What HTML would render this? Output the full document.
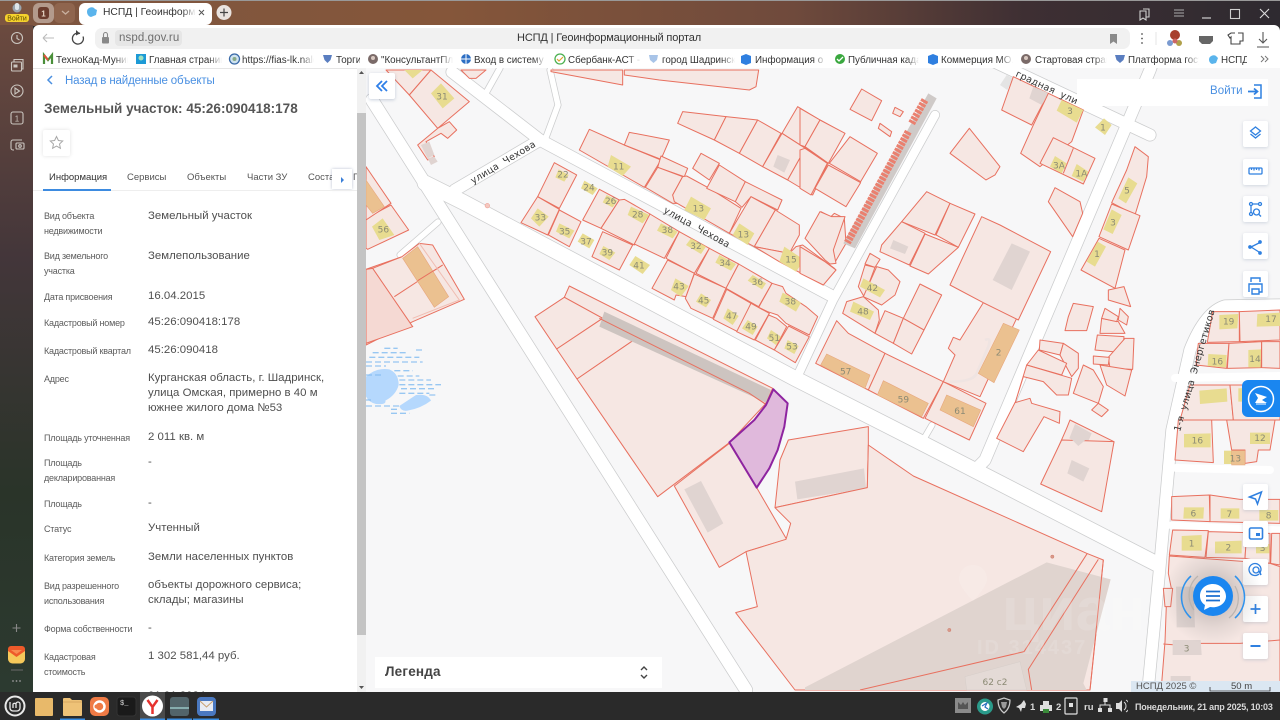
<!DOCTYPE html>
<html lang="ru"><head><meta charset="utf-8"><title>НСПД</title>
<style>
html,body{margin:0;padding:0;width:1280px;height:720px;overflow:hidden;background:#2a2a2a;font-family:"Liberation Sans","Noto Sans CJK SC",sans-serif}
div,span{position:absolute;white-space:nowrap}
#top{left:0;top:0;width:1280px;height:26px;background:linear-gradient(90deg,#7d5540 0,#85563a 35%,#6f4a3c 62%,#3e2f33 80%,#2e2a30 100%);border-top:1px solid #999;box-sizing:border-box}
#side{left:0;top:25px;width:33px;height:667px;background:linear-gradient(180deg,#6b4a3f 0,#43363a 35%,#2a3429 70%,#2c3a30 100%)}
#chrome{left:33px;top:25px;width:1247px;height:43px;background:#fff;border-radius:6px 6px 0 0}
#addr{left:62px;top:3px;width:1035px;height:21px;background:#f1f1f1;border-radius:7px}
.bm{top:54px;font-size:9.8px;color:#333;height:13px;line-height:13px;overflow:hidden;-webkit-mask-image:linear-gradient(90deg,#000 82%,transparent);mask-image:linear-gradient(90deg,#000 82%,transparent)}
#panel{left:33px;top:68px;width:324px;height:624px;background:#fff;overflow:hidden;border-top:1px solid #e5e5e5;box-sizing:border-box}
.l{left:11px;font-size:9px;color:#5c5c5c;letter-spacing:-.2px;margin-top:1px}
.v{left:115px;font-size:11.4px;color:#4f4f4f;letter-spacing:.02px;margin-top:2px}
.t{top:103px;font-size:9.5px;color:#555}
#sb{left:357px;top:68px;width:9px;height:624px;background:#f1f1f1}
#map{left:366px;top:68px;width:914px;height:624px;overflow:hidden;background:#f7f7f8}
.btn{left:1243px;width:25px;height:26px;background:#fff;border-radius:2px;box-shadow:0 1px 3px rgba(120,140,170,.3)}
.p{fill:#f6e7e3;stroke:#e8705f;stroke-width:1;vector-effect:non-scaling-stroke;stroke-linejoin:round}
.y{fill:#e8dc90;stroke:none}
.o{fill:#ebc190;stroke:#e8a77c;stroke-width:.6;vector-effect:non-scaling-stroke}
.g{fill:#e0d4d1;stroke:none}
.n{font:27px "DejaVu Sans",sans-serif;fill:#8b8a74;text-anchor:middle}
.ln{fill:none;stroke:#e8705f;stroke-width:1;vector-effect:non-scaling-stroke}
.c{fill:none;stroke:#cbcccd;stroke-linecap:round;stroke-linejoin:round}
.w{fill:none;stroke:#fff;stroke-linecap:round;stroke-linejoin:round}
.st{font:9.5px "DejaVu Sans",sans-serif;fill:#333;letter-spacing:.2px;white-space:pre}
#tb{left:0;top:692px;width:1280px;height:28px;background:#2a2a2a}
.tr{top:702px;font-size:9.5px;color:#d8d8d8;font-weight:bold}
</style></head><body>

<div id="top"></div>
<div id="side"></div>

<!-- profile + tab row -->
<svg style="position:absolute;left:0;top:0" width="240" height="26">
<circle cx="17" cy="8" r="4.5" fill="#9aa4ad"/><rect x="15" y="3" width="4" height="7" rx="2" fill="#dfe6ea"/>
<rect x="5" y="14" width="24" height="8" rx="3" fill="#f6d32d"/>
<text x="17" y="20.5" font-size="7" fill="#5a4500" text-anchor="middle" font-family="Liberation Sans">Войти</text>
<rect x="33" y="3" width="21" height="20" rx="6" fill="#b39a8c"/>
<rect x="38" y="7" width="11" height="12" rx="3" fill="#6a3c2e"/><text x="43.500" y="16.500" font-size="8" fill="#e8d8c8" text-anchor="middle" font-family="Liberation Sans" font-weight="bold">1</text>
<rect x="54" y="3" width="21" height="20" rx="5" fill="#8f654e"/>
<path d="M62 11l3.500 3 3.500-3" stroke="#c8b0a0" stroke-width="1.300" fill="none"/>
<rect x="79" y="3" width="133" height="22" rx="6" fill="#fff"/>
<path d="M87 12a4.500 4.500 0 0 1 8-3l2 1-1 5-5 2a5 5 0 0 1-4-5z" fill="#5ab4ec"/>
<path d="M199 10l5 5m0-5l-5 5" stroke="#555" stroke-width="1"/>
<circle cx="224" cy="12.500" r="7.500" fill="#e9e3df"/>
<path d="M224 8.500v8m-4-4h8" stroke="#444" stroke-width="1.200"/>
</svg>
<div style="left:103px;top:6px;font-size:10.3px;color:#333;line-height:14px;width:93px;overflow:hidden;-webkit-mask-image:linear-gradient(90deg,#000 85%,transparent);mask-image:linear-gradient(90deg,#000 85%,transparent)">НСПД | Геоинформаци</div>

<!-- window controls -->
<svg style="position:absolute;left:1130px;top:3px" width="150" height="20" fill="none" stroke="#cfcfcf" stroke-width="1.100">
<path d="M13 6h6v8h-3M10 8h6v9l-3-2-3 2z"/>
<path d="M44 7h10M44 10h10M44 13h10" stroke="#aaa"/>
<path d="M72 15h9" stroke="#ddd"/>
<rect x="100.500" y="6.500" width="9" height="9"/>
<path d="M130 6l9 9m0-9l-9 9" stroke="#ddd"/>
</svg>

<!-- browser chrome -->
<div id="chrome"><div id="addr"></div></div>
<div style="left:115px;top:30px;width:67px;height:16px;background:#e6e6e6;border-radius:4px"></div>
<div style="left:119px;top:32px;font-size:11.5px;color:#6e6e6e;letter-spacing:.1px">nspd.gov.ru</div>
<div style="left:517px;top:32px;font-size:11px;color:#333;letter-spacing:-.13px">НСПД | Геоинформационный портал</div>
<svg style="position:absolute;left:33px;top:25px" width="1247" height="26" fill="none">
<path d="M10 13h11M10 13l4-4M10 13l4 4" stroke="#bbb" stroke-width="1.100"/>
<path d="M47 8.500a5.500 5.500 0 1 0 3 3" stroke="#444" stroke-width="1.300"/><path d="M43 5l4 3.500-4 2z" fill="#444"/>
<rect x="69" y="12" width="7" height="6.500" rx="1" fill="#888"/><path d="M70.500 12V9.500a2 2 0 0 1 4 0V12" stroke="#888" stroke-width="1.100"/>
<path d="M1077 9h7v10l-3.500-2.500L1077 19z" fill="#8a8a8a"/>
<circle cx="1109" cy="9" r=".9" fill="#555"/><circle cx="1109" cy="13.500" r=".9" fill="#555"/><circle cx="1109" cy="18" r=".9" fill="#555"/>
<path d="M1123 7v13" stroke="#e5e5e5"/>
<circle cx="1142" cy="10" r="5" fill="#a8402e"/><circle cx="1137" cy="18" r="3" fill="#7a9ad0"/><circle cx="1146" cy="18" r="3" fill="#b0a04a"/><circle cx="1142" cy="16" r="2.500" fill="#c66"/>
<path d="M1166 11h14v5l-3 3h-8l-3-3z" fill="#666"/>
<path d="M1202 8h-4l-3 2 2 3 1-1v7h9v-3h3V8h-5" stroke="#444" stroke-width="1.100"/>
<path d="M1230 7v11m-4-4l4 4 4-4M1224 22h12" stroke="#555" stroke-width="1.100"/>
</svg>

<!-- bookmarks -->
<svg style="position:absolute;left:0;top:50px" width="1280" height="18">
<path d="M44 14V5l4 5 4-5v9" stroke="#4a8f3a" stroke-width="2.200" fill="none"/><path d="M44 5l4 5" stroke="#e0503a" stroke-width="2"/>
<rect x="136" y="4" width="10" height="10" fill="#1d9ad6"/><circle cx="141" cy="8" r="2.500" fill="#9fe0c0"/>
<circle cx="234.500" cy="9" r="5" fill="#cfe3f0" stroke="#3a6aa8" stroke-width="1.300"/><circle cx="234.500" cy="9" r="2" fill="#8a8"/>
<path d="M323 5h9l-1.500 5-3 3-3-3z" fill="#5a7ec0"/>
<circle cx="373" cy="9" r="5" fill="#7a6a68"/><circle cx="373" cy="8" r="2" fill="#d8c8c0"/>
<circle cx="466" cy="9" r="5" fill="#2d6fc4"/><path d="M461 9h10M466 4v10" stroke="#fff"/>
<circle cx="560" cy="9" r="5" fill="#fff" stroke="#4cb050" stroke-width="1.300"/><path d="M557 9l2 2 4-4" stroke="#e0a030" fill="none" stroke-width="1.200"/>
<path d="M649 5h9l-1 5-3.500 3-3.500-3z" fill="#a8c4e8"/>
<path d="M741 6l5-2 5 2v7l-5 2-5-2z" fill="#2f7fe0"/>
<circle cx="840" cy="9" r="5" fill="#3aa83f"/><path d="M837 9l2 2 4-4" stroke="#fff" fill="none" stroke-width="1.300"/>
<path d="M928 6l5-2 5 2v7l-5 2-5-2z" fill="#2f7fe0"/>
<circle cx="1026" cy="9" r="5" fill="#7a6a68"/><circle cx="1026" cy="8" r="2" fill="#d8c8c0"/>
<path d="M1115 5h10l-1.500 5-3.500 3-3.500-3z" fill="#5a7ec0"/>
<path d="M1209 10a4.500 4.500 0 0 1 8-3l1 1-2 5-4 1a5 5 0 0 1-3-4z" fill="#5ab4ec"/>
<path d="M1261 6l3 3-3 3M1265 6l3 3-3 3" stroke="#777" fill="none"/>
</svg>
<span class="bm" style="left:56px;width:72px">ТехноКад-Муниципал</span>
<span class="bm" style="left:149px;width:73px">Главная страница</span>
<span class="bm" style="left:242px;width:72px">https://fias-lk.nalog</span>
<span class="bm" style="left:336px;width:24px;-webkit-mask-image:none;mask-image:none">Торги</span>
<span class="bm" style="left:381px;width:72px">"КонсультантПлюс</span>
<span class="bm" style="left:474px;width:72px">Вход в систему :: Б</span>
<span class="bm" style="left:568px;width:73px">Сбербанк-АСТ - Эл</span>
<span class="bm" style="left:662px;width:73px">город Шадринск</span>
<span class="bm" style="left:755px;width:71px">Информация о ра</span>
<span class="bm" style="left:848px;width:71px">Публичная кадастр</span>
<span class="bm" style="left:941px;width:72px">Коммерция МО.хм</span>
<span class="bm" style="left:1035px;width:72px">Стартовая страница</span>
<span class="bm" style="left:1128px;width:71px">Платформа государ</span>
<span class="bm" style="left:1221px;width:26px;-webkit-mask-image:none;mask-image:none">НСПД</span>

<!-- sidebar icons -->
<svg style="position:absolute;left:0;top:25px" width="33" height="667" fill="none" stroke="#cbc6c0" stroke-width="1.100">
<circle cx="17" cy="13" r="5.500"/><path d="M17 10v3.500l2.500 1.500"/>
<rect x="11.500" y="37" width="10" height="9" rx="1"/><path d="M14 37v-2.500h9V44h-1.500"/><rect x="13.500" y="39.500" width="4" height="3" fill="#cbc6c0" stroke="none"/>
<circle cx="17" cy="66" r="6"/><path d="M15 63l4.500 3-4.500 3z"/>
<rect x="11" y="87" width="12" height="12" rx="2"/><text x="17" y="96.500" font-size="8" fill="#cbc6c0" stroke="none" text-anchor="middle" font-family="Liberation Sans">1</text>
<path d="M22 115h-9a2 2 0 0 0-2 2v6a2 2 0 0 0 2 2h1"/><rect x="16" y="118" width="8" height="6" rx="1"/><circle cx="20" cy="121" r="1.300"/>
<path d="M16.500 599v8m-4-4h8" stroke="#888"/>
<path d="M11 645h12" stroke="#666"/>
<circle cx="13" cy="656" r=".9" fill="#999" stroke="none"/><circle cx="16.500" cy="656" r=".9" fill="#999" stroke="none"/><circle cx="20" cy="656" r=".9" fill="#999" stroke="none"/>
</svg>
<svg style="position:absolute;left:8px;top:646px" width="18" height="18"><rect width="17" height="17" y="0.500" rx="4.500" fill="#f6c95a"/><path d="M0 5l8.500 6L17 5V3a3 3 0 0 0-3-3H3A3 3 0 0 0 0 3z" fill="#ee5a2a"/><path d="M3 4l5.500 4L14 4z" fill="#f88a50"/></svg>

<!-- info panel -->
<div id="panel">
<svg style="position:absolute;left:12px;top:5px" width="14" height="12"><path d="M7 2L3 6l4 4" stroke="#4a8fe0" stroke-width="1.500" fill="none"/></svg>
<div style="left:32px;top:4px;margin-top:2px;font-size:11.500px;color:#4a90e2;letter-spacing:-.14px">Назад в найденные объекты</div>
<div style="left:11px;top:32px;font-size:13.500px;color:#555;font-weight:bold;letter-spacing:.02px">Земельный участок: 45:26:090418:178</div>
<div style="left:10px;top:61px;width:27px;height:26px;box-shadow:0 0 4px rgba(0,0,0,.12);border-radius:2px"></div>
<svg style="position:absolute;left:16px;top:66px" width="15" height="15"><path d="M7.500 1.500l1.900 4 4.300.5-3.200 3 .9 4.300-3.900-2.200-3.900 2.200.9-4.300-3.200-3 4.300-.5z" fill="none" stroke="#a8a8a8"/></svg>
<span class="t" style="left:16px;color:#333">Информация</span>
<span class="t" style="left:94px">Сервисы</span>
<span class="t" style="left:154px">Объекты</span>
<span class="t" style="left:214px">Части ЗУ</span>
<span class="t" style="left:275px">Состав</span>
<span class="t" style="left:320px">П</span>
<div style="left:299px;top:100px;width:20px;height:20px;background:#fff;box-shadow:0 0 3px rgba(80,100,140,.4)"></div>
<svg style="position:absolute;left:307px;top:107px" width="6" height="8"><path d="M1 1l3 3-3 3z" fill="#3a7fd8"/></svg>
<div style="left:0;top:121px;width:324px;height:1px;background:#eee"></div>
<div style="left:10px;top:120px;width:68px;height:2px;background:#3d8be0"></div>

<span class="l" style="top:141px">Вид объекта</span><span class="l" style="top:156px">недвижимости</span><span class="v" style="top:139px">Земельный участок</span>
<span class="l" style="top:181px">Вид земельного</span><span class="l" style="top:196px">участка</span><span class="v" style="top:179px">Землепользование</span>
<span class="l" style="top:222px">Дата присвоения</span><span class="v" style="top:219px">16.04.2015</span>
<span class="l" style="top:248px">Кадастровый номер</span><span class="v" style="top:245px">45:26:090418:178</span>
<span class="l" style="top:276px">Кадастровый квартал</span><span class="v" style="top:273px">45:26:090418</span>
<span class="l" style="top:304px">Адрес</span><span class="v" style="top:301px">Курганская область, г. Шадринск,</span><span class="v" style="top:316px">улица Омская, примерно в 40 м</span><span class="v" style="top:331px">южнее жилого дома №53</span>
<span class="l" style="top:363px">Площадь уточненная</span><span class="v" style="top:360px">2 011 кв. м</span>
<span class="l" style="top:388px">Площадь</span><span class="l" style="top:403px">декларированная</span><span class="v" style="top:385px">-</span>
<span class="l" style="top:429px">Площадь</span><span class="v" style="top:426px">-</span>
<span class="l" style="top:454px">Статус</span><span class="v" style="top:451px">Учтенный</span>
<span class="l" style="top:483px">Категория земель</span><span class="v" style="top:480px">Земли населенных пунктов</span>
<span class="l" style="top:511px">Вид разрешенного</span><span class="l" style="top:526px">использования</span><span class="v" style="top:508px">объекты дорожного сервиса;</span><span class="v" style="top:523px">склады; магазины</span>
<span class="l" style="top:554px">Форма собственности</span><span class="v" style="top:551px">-</span>
<span class="l" style="top:582px">Кадастровая</span><span class="l" style="top:597px">стоимость</span><span class="v" style="top:579px">1 302 581,44 руб.</span>
<span class="v" style="top:619px;color:#222">01.01.2024</span>
</div>
<div id="sb"><div style="left:0;top:45px;width:9px;height:522px;background:#c4c4c4"></div>
<svg style="position:absolute;left:1px;top:2px" width="7" height="5"><path d="M3.500 1l2.500 3H1z" fill="#555"/></svg>
<svg style="position:absolute;left:1px;top:617px" width="7" height="5"><path d="M3.500 4L6 1H1z" fill="#555"/></svg></div>

<!-- MAP -->
<div id="map">
<svg style="position:absolute;left:-366px;top:-68px" width="1280" height="720">
<g>
<g class="c" stroke-width="16.500">
<path d="M425 183L463 202L796 379L918 441L1157 564"/>
<path d="M372 100L746 690" stroke-width="14"/>
<path d="M452 72L540 140L830 295" stroke-width="13"/>
<path d="M455 190L540 140" stroke-width="13"/>
<path d="M935 115L833 300L798 375" stroke-width="10"/>
<path d="M1165 25L1150 70L985 460L975 470" stroke-width="13"/>
<path d="M980 55L1150 135" stroke-width="13"/>
<path d="M550 70L558 105L545 140" stroke-width="7"/>
<path d="M500 68L486 93" stroke-width="7"/>
<path d="M400 255L438 222" stroke-width="7"/>
<path d="M918 441L925 437L932 425" stroke-width="7"/>
<path d="M1280 305L1225 306Q1205 312 1190 350L1172 430L1160 565L1148 690" stroke-width="13"/>
</g>
<g class="w" stroke-width="15">
<path d="M425 183L463 202L796 379L918 441L1157 564"/>
<path d="M372 100L746 690" stroke-width="12.500"/>
<path d="M452 72L540 140L830 295" stroke-width="11.500"/>
<path d="M455 190L540 140" stroke-width="11.500"/>
<path d="M935 115L833 300L798 375" stroke-width="8.500"/>
<path d="M1165 25L1150 70L985 460L975 470" stroke-width="11.500"/>
<path d="M980 55L1150 135" stroke-width="11.500"/>
<path d="M550 70L558 105L545 140" stroke-width="5.500"/>
<path d="M500 68L486 93" stroke-width="5.500"/>
<path d="M400 255L438 222" stroke-width="5.500"/>
<path d="M918 441L925 437L932 425" stroke-width="5.500"/>
<path d="M1280 305L1225 306Q1205 312 1190 350L1172 430L1160 565L1148 690" stroke-width="11.500"/>
<path d="M1175 378L1280 376" stroke-width="8"/>
<path d="M1176 468L1270 470" stroke-width="8"/>
<path d="M1165 525L1280 530" stroke-width="7"/>
</g>
</g>

<g transform="translate(366,70) scale(.33333)">
<polygon class="p" points="60,0 130,75 195,0"/><polygon class="p" points="195,0 310,95 215,175 130,75"/>
<polygon class="y" points="115,0 170,0 140,25"/><polygon class="y" points="225,40 265,85 230,115 195,70"/>
<polygon class="p" points="215,175 250,155 272,180 245,205 225,190 180,215 205,260 185,270 155,225"/>
<polygon class="g" points="165,225 190,215 205,255 185,265"/><polygon class="g" points="185,265 205,260 215,275 195,285"/>
<polygon class="p" points="285,0 360,0 330,25 310,25"/>
<polygon class="p" points="555,0 770,0 770,45 555,5"/><polygon class="p" points="775,0 1178,0 1170,50 1150,60 880,30 775,15"/>
<polygon class="p" points="950,125 1080,140 1045,210 935,160"/><polygon class="p" points="1080,140 1175,150 1120,250 1045,210"/><polygon class="p" points="1175,150 1245,190 1190,290 1120,250"/>
<polygon class="p" points="1295,110 1362,150 1318,235 1248,190"/><polygon class="p" points="1362,150 1435,190 1388,275 1318,235"/><polygon class="p" points="1248,190 1318,235 1265,330 1190,290"/><polygon class="p" points="1318,235 1388,275 1340,375 1265,330"/>
<polygon class="g" points="1235,255 1272,270 1255,308 1222,290"/>
<polygon class="p" points="670,178 775,225 885,270 835,352 640,240"/><polygon class="p" points="790,187 910,210 885,268 775,225"/>
<polygon class="p" points="885,258 965,295 955,320 875,292"/><polygon class="p" points="875,292 950,320 920,375 935,400 920,400 838,352"/>
<polygon class="p" points="962,318 1030,355 1125,415 1090,490 925,395 920,375 950,320"/>
<polygon class="p" points="1005,250 1060,280 1030,330 980,295"/><polygon class="p" points="1060,285 1138,335 1108,395 1022,355"/>
<polygon class="p" points="1138,335 1248,390 1235,420 1155,380 1128,412 1108,395"/><polygon class="p" points="1155,380 1228,420 1165,530 1090,490"/>
<polygon class="p" points="1228,420 1300,465 1300,495 1270,550 1165,530"/>
<polygon class="p" points="1290,530 1310,525 1405,595 1410,600 1380,620 1372,645 1240,575 1165,530 1270,550"/>
<polygon class="p" points="1365,425 1395,440 1405,430 1435,445 1440,520 1405,580 1375,565 1380,545 1318,505"/>
<polygon class="y" points="735,255 795,290 770,318 725,290"/><polygon class="y" points="975,380 1035,415 1015,450 955,420"/><polygon class="y" points="1120,460 1165,490 1145,525 1100,495"/><polygon class="y" points="1255,530 1315,570 1290,605 1240,575"/>

<polygon class="p" points="565,278 632,315 580,415 515,380"/><polygon class="p" points="515,380 580,418 545,495 465,458"/><polygon class="p" points="580,420 645,455 610,530 547,495"/>
<polygon class="p" points="700,358 760,390 705,475 650,450"/><polygon class="p" points="775,388 852,432 805,525 705,475 760,390"/>
<polygon class="p" points="852,432 940,485 895,565 805,522"/><polygon class="p" points="940,485 1030,535 985,610 900,565"/><polygon class="p" points="1030,535 1118,582 1080,655 990,610"/><polygon class="p" points="1118,582 1218,640 1178,710 1080,655"/>
<polygon class="p" points="1218,640 1250,650 1260,670 1320,710 1355,740 1330,795 1260,760 1235,735 1205,725 1178,712"/>
<polygon class="p" points="710,485 800,525 760,600 678,560"/><polygon class="p" points="905,570 985,610 960,680 930,675 925,690 858,655"/>
<polygon class="p" points="985,612 1080,655 1040,745 975,715 958,685"/><polygon class="p" points="1082,658 1155,700 1115,785 1042,748"/><polygon class="p" points="1155,700 1210,730 1165,810 1112,785"/>
<polygon class="p" points="1208,735 1232,745 1262,770 1225,840 1168,810"/><polygon class="p" points="1268,768 1330,800 1288,878 1225,840"/>
<polygon class="y" points="578,298 608,315 595,335 568,322"/><polygon class="y" points="655,332 695,355 680,375 645,355"/><polygon class="y" points="722,375 755,392 740,412 710,397"/><polygon class="y" points="795,410 850,435 830,460 785,435"/><polygon class="y" points="885,460 935,485 920,505 873,482"/><polygon class="y" points="975,505 1020,530 1005,552 960,525"/><polygon class="y" points="1060,555 1110,582 1095,602 1048,578"/><polygon class="y" points="1160,615 1200,640 1188,658 1145,632"/><polygon class="y" points="1250,668 1305,698 1290,725 1240,695"/>
<polygon class="y" points="515,415 548,440 520,470 495,445"/><polygon class="y" points="580,460 625,482 610,505 570,485"/><polygon class="y" points="650,490 685,510 670,535 635,515"/><polygon class="y" points="712,528 748,548 730,570 700,552"/><polygon class="y" points="808,558 852,585 830,612 790,585"/><polygon class="y" points="928,625 968,648 945,680 915,660"/><polygon class="y" points="1005,670 1035,690 1020,712 990,695"/><polygon class="y" points="1085,715 1118,738 1100,765 1072,745"/><polygon class="y" points="1145,750 1175,770 1160,795 1128,775"/><polygon class="y" points="1215,780 1245,800 1230,825 1203,805"/><polygon class="y" points="1265,810 1298,828 1285,852 1255,835"/>

<polygon class="p" points="0,445 75,405 128,480 5,538 0,535"/><polygon class="p" points="0,290 75,400 0,450"/>
<polygon class="o" points="0,330 55,410 20,430 0,405"/><polygon class="y" points="50,445 85,495 40,510 18,470"/>
<polygon class="p" points="0,598 108,560 160,520 200,525 295,688 140,755 0,825"/>
<polygon points="0,598 20,595 140,770 0,820" fill="#f5d9d3" stroke="#e8705f" stroke-width="1" vector-effect="non-scaling-stroke"/>
<path class="ln" d="M85,680L230,585" /><polygon class="o" points="110,565 155,530 248,680 205,712"/><path class="ln" d="M155,632L230,585M108,560L20,595"/>
<path d="M160,520L280,690L140,745" fill="none" stroke="#f0bdb2" stroke-width="1" vector-effect="non-scaling-stroke"/>
<circle cx="364" cy="407" r="7" fill="#f4c8c0" stroke="#e8705f"/>

<g class="n">
<text x="228" y="88">31</text><text x="758" y="298">11</text><text x="997" y="424">13</text><text x="1132" y="502">13</text><text x="1275" y="578">15</text>
<text x="591" y="322">22</text><text x="669" y="362">24</text><text x="734" y="402">26</text><text x="815" y="442">28</text><text x="904" y="489">38</text><text x="990" y="537">32</text><text x="1077" y="588">34</text><text x="1174" y="645">36</text><text x="1273" y="703">38</text>
<text x="523" y="451">33</text><text x="596" y="493">35</text><text x="660" y="524">37</text><text x="724" y="556">39</text><text x="819" y="596">41</text><text x="939" y="658">43</text><text x="1013" y="701">45</text><text x="1097" y="747">47</text><text x="1155" y="779">49</text><text x="1225" y="813">51</text><text x="1278" y="838">53</text><text x="52" y="487">56</text>
</g>
</g>

<g transform="translate(366,280) scale(.33333)">
<polygon class="p" points="610,18 1220,325 1198,372 1150,340 710,115 595,52"/>
<polygon class="p" points="507,110 595,52 710,115 572,207"/><polygon class="p" points="572,207 710,115 815,172 633,297"/>
<polygon class="p" points="633,297 815,172 1150,340 1198,372 1090,488 875,650"/>
<polygon points="715,95 1215,330 1200,368 700,140" fill="#cdc4c0" stroke="none"/>
<path class="ln" d="M700,115L1150,340L1198,372" />
<polygon class="p" points="925,618 1090,490 1172,623 1262,778 1140,815 1060,862"/>
<polygon class="g" points="955,628 1005,603 1072,730 1025,758"/>
<polygon points="1222,328 1265,370 1255,440 1235,510 1210,565 1172,623 1090,487 1165,420 1200,375" fill="#e0b9dc" stroke="#8e24a0" stroke-width="2" vector-effect="non-scaling-stroke" stroke-linejoin="round"/>
<path d="M0,290Q30,262 70,268Q98,280 98,315Q90,345 58,362Q62,375 30,372Q10,368 0,350Z" fill="#b5d8fd"/>
<path d="M100,378L150,345Q185,340 195,362Q165,385 125,392Q105,395 100,378Z" fill="#b5d8fd"/>
<g stroke="#7fbaf0" stroke-width="4" fill="none" stroke-dasharray="18 9" opacity=".8">
<path d="M55,205H95M150,210H172M20,218H120M10,232H160M0,246H170M0,258H60M85,272H140M0,285H50M95,288H160M100,300H195M100,314H225M105,326H210M100,340H190M0,360H15M190,345H215M0,378H100M75,388H100M75,400H130"/>
</g>
</g>

<g transform="translate(800,70) scale(.33333)">
<polygon class="p" points="0,115 60,150 15,230 0,225"/><polygon class="p" points="60,150 135,190 85,280 15,230"/><polygon class="p" points="150,200 232,250 182,335 88,280"/><polygon class="p" points="0,240 15,235 82,280 33,375 0,355"/><polygon class="p" points="85,285 182,338 138,410 45,355"/>
<polygon class="p" points="185,57 245,92 215,152 150,118"/><polygon class="p" points="285,112 310,125 300,140 278,130"/><polygon class="p" points="240,160 275,185 270,200 235,175"/>
<polygon class="p" points="60,425 95,440 135,440 100,540 108,580 90,582 75,570 15,505"/>
<polygon points="385,70 410,85 165,535 130,520" fill="#cfcac8"/>
<path d="M375,90L335,160M325,185L142,518" fill="none" stroke="#ea806f" stroke-width="22" stroke-dasharray="9 3"/>
<polygon class="p" points="0,530 75,575 108,600 70,645 0,610"/>
<polygon class="p" points="305,455 380,365 450,400 405,495"/><polygon class="p" points="450,400 525,432 475,532 408,495"/><polygon class="p" points="305,455 375,490 328,585 240,545 245,525"/><polygon class="p" points="375,492 475,532 385,612 330,588"/>
<polygon class="g" points="280,510 325,530 315,552 270,535"/>
<polygon class="p" points="210,550 240,568 225,592 195,582"/><polygon class="p" points="195,585 225,592 192,680 175,650"/>
<polygon class="p" points="230,590 265,600 300,635 285,675 245,705 190,680"/><polygon class="y" points="190,625 255,660 240,682 180,650"/>
<polygon class="p" points="140,695 190,680 235,720 238,750 225,790 128,730"/><polygon class="y" points="160,695 222,725 210,750 150,725"/>
<polygon class="p" points="255,722 310,745 280,820 225,790"/><polygon class="p" points="310,745 372,780 335,852 280,820"/><polygon class="p" points="360,642 425,675 372,780 310,745"/>
<polygon class="p" points="110,752 145,790 255,850 205,960 47,880"/><polygon class="p" points="255,850 430,935 370,1045 205,960"/><polygon class="p" points="430,935 558,1000 508,1110 375,1045"/>
<polygon class="o" points="80,852 210,915 195,955 62,885"/><polygon class="o" points="250,932 385,1000 365,1040 232,975"/><polygon class="o" points="440,975 542,1020 520,1070 420,1020"/>
<polygon class="p" points="550,698 650,745 600,850 540,980 430,935 465,855 445,835 460,802 480,810"/>
<path d="M555,810Q575,800 565,830L530,910Q520,935 450,935" fill="none" stroke="#efe4e2" stroke-width="8"/>
<polygon class="o" points="610,760 658,780 582,938 535,910"/>
<polygon class="p" points="545,440 600,465 752,545 655,750 550,698 450,645"/><polygon class="g" points="635,520 690,545 635,660 578,630"/>
<polygon class="p" points="508,175 600,290 585,315 558,330 450,250"/><polygon class="p" points="765,353 840,395 848,430 818,500 745,395"/>
<polygon points="620,15 640,25 622,60 600,45" fill="#e4e4e4"/>
<polygon class="p" points="640,20 745,70 695,165 605,120"/><polygon class="g" points="700,50 748,70 725,105 688,85"/>
<polygon class="p" points="745,70 850,120 815,215 720,290 662,250 700,165"/><polygon class="y" points="785,90 850,120 830,158 770,122"/>
<polygon class="p" points="760,203 885,265 850,342 720,280"/><path class="ln" d="M820,235L790,310"/><polygon class="y" points="765,258 800,280 785,310 750,290"/><polygon class="y" points="830,282 865,305 850,335 815,318"/>
<polygon class="y" points="912,145 935,165 915,195 885,172"/>
<polygon class="p" points="1005,230 1045,260 1040,320 1005,435 935,398 980,300"/><polygon class="y" points="985,322 1012,340 978,400 955,385"/>
<polygon class="p" points="935,402 1020,437 985,540 897,500"/><polygon class="y" points="935,418 965,435 938,492 910,478"/>
<polygon class="p" points="897,505 975,540 945,655 843,600"/><polygon class="y" points="893,515 918,530 885,590 860,575"/>
<polygon class="p" points="925,660 972,650 992,710 925,690"/><polygon class="p" points="820,700 880,710 860,782 795,782 805,740"/>
<polygon class="p" points="905,745 955,755 975,790 900,790"/><polygon class="p" points="892,795 972,800 968,848 885,840"/><polygon class="p" points="975,805 1002,805 998,898 930,895 925,862"/><polygon class="p" points="880,858 928,862 925,885 880,882"/><polygon class="p" points="900,885 995,900 975,978 920,945"/><polygon class="p" points="960,715 985,740 980,765 955,750"/><polygon class="p" points="915,715 955,740 950,755 905,745"/>
<polygon class="p" points="720,810 790,820 780,855 718,840"/><polygon class="p" points="790,820 835,850 835,895 815,920 780,855"/><polygon class="p" points="715,840 800,880 785,915 680,885"/><polygon class="p" points="680,885 815,925 805,975 770,975 730,935 670,920 645,1000"/>
<polygon class="p" points="645,998 690,985 695,1000 780,1025 778,1060 732,1040 670,1145 590,1105"/>
<polygon class="p" points="850,885 880,900 910,950 895,1000 820,970"/><polygon class="p" points="895,1000 925,1020 905,1040 875,1020"/>
<polygon class="p" points="810,1050 942,1115 925,1200 745,1200 800,1075"/><polygon class="g" points="825,1062 875,1090 860,1125 808,1105"/><polygon class="g" points="835,1170 870,1190 860,1200 825,1200"/>
<g class="n">
<text x="810" y="132">3</text><text x="909" y="181">1</text><text x="777" y="296">3А</text><text x="844" y="319">1А</text><text x="981" y="370">5</text><text x="939" y="466">3</text><text x="891" y="561">1</text><text x="217" y="663">42</text><text x="189" y="733">48</text><text x="596" y="857">2</text><text x="137" y="913">57</text><text x="310" y="998">59</text><text x="480" y="1032">61</text>
</g>
</g>

<g transform="translate(660,440) scale(.33333)">
<polygon class="p" points="385,0 625,-40 625,15 622,143 345,203 360,60"/>
<polygon class="g" points="405,125 612,85 618,145 412,178"/>
<polygon class="p" points="625,15 760,108 1280,340 1330,360 1310,560 1290,750 405,750 227,518 292,500 258,335 378,298 392,250 345,203 622,143"/>
<polygon points="1160,367 1352,418 1270,730 1280,750 435,750 435,742" fill="#e0d4cf"/>
<path class="ln" d="M1282,340L1092,635L600,750M1315,358L1105,688L1115,750M1330,360L1290,750"/>
<polygon points="915,710 1080,665 1100,750 920,750" fill="#e4dad6" stroke="#cfc8c4"/>
<text class="n" x="1005" y="735">62  с2</text>
<circle cx="1177" cy="350" r="5" fill="#d99a8a" stroke="#c66050"/><circle cx="868" cy="570" r="5" fill="#d99a8a" stroke="#c66050"/>
<polygon class="p" points="1205,0 1362,5 1325,215 1142,132"/><polygon class="g" points="1235,60 1288,85 1270,125 1222,100"/>
<polygon class="g" points="1232,-5 1282,-5 1255,18"/>
</g>

<g transform="translate(1130,110) scale(.33333)">
<polygon class="p" points="248,605 328,605 328,695 232,697"/><polygon class="p" points="328,605 450,600 450,690 330,695"/>
<polygon class="y" points="268,615 325,612 322,655 268,658"/><polygon class="y" points="382,612 450,608 450,648 380,650"/>
<polygon class="p" points="205,700 297,700 290,775 198,765"/><polygon class="p" points="297,700 395,695 393,773 292,775"/><polygon class="p" points="395,695 450,695 450,775 395,773"/>
<polygon class="y" points="235,732 290,735 288,772 233,768"/><polygon class="y" points="355,720 393,718 392,772 355,772"/>
<polygon class="p" points="180,825 300,825 310,930 150,930"/><polygon class="p" points="300,825 450,825 450,930 310,930"/>
<polygon class="y" points="208,842 290,835 292,875 210,882"/><polygon class="y" points="325,835 370,832 370,875 325,875"/>
<g class="n"><text x="296" y="644">19</text><text x="423" y="636">17</text><text x="262" y="764">16</text><text x="375" y="756">14</text></g>
</g>

<g transform="translate(1130,420) scale(.33333)">
<polygon class="p" points="145,0 245,0 250,128 135,120"/><polygon class="y" points="162,42 242,40 242,82 162,82"/>
<polygon class="p" points="295,0 435,0 420,90 385,90 380,125 345,130 345,90 305,90 290,0"/><polygon class="y" points="360,38 420,38 420,72 360,72"/>
<polygon class="y" points="282,92 305,92 305,132 282,132"/><polygon class="o" points="305,92 345,92 345,135 305,135"/>
<polygon class="p" points="125,230 238,225 240,305 125,300"/><polygon class="p" points="240,225 330,238 450,238 450,310 240,305"/>
<polygon class="y" points="162,262 222,262 220,296 160,296"/><polygon class="y" points="272,265 328,265 328,296 272,296"/><polygon class="y" points="388,270 445,270 445,302 388,302"/>
<polygon class="p" points="128,330 235,332 225,412 118,405"/><polygon class="p" points="235,335 350,338 345,415 228,412"/><polygon class="p" points="350,340 420,340 420,430 345,415"/><polygon class="p" points="425,340 450,340 450,435 422,430"/>
<polygon class="y" points="155,348 215,345 215,392 155,392"/><polygon class="y" points="255,365 335,362 335,400 255,400"/><polygon class="y" points="378,372 418,372 418,400 378,400"/>
<polygon class="p" points="118,408 420,430 450,440 450,790 95,790 105,665 110,530 125,510 115,460"/>
<path class="ln" d="M100,672L205,680L205,670L330,670L450,660"/>
<polygon class="g" points="138,500 190,500 195,622 140,622"/><polygon class="g" points="128,660 212,660 215,705 128,705"/><polygon class="g" points="122,768 182,768 182,790 122,790"/>
<polygon class="p" points="100,505 128,505 122,560 105,560"/>
<g class="n"><text x="202" y="71">16</text><text x="390" y="63">12</text><text x="316" y="124">13</text><text x="190" y="290">6</text><text x="298" y="291">7</text><text x="416" y="295">8</text><text x="185" y="380">1</text><text x="295" y="391">2</text><text x="398" y="393">3</text><text x="170" y="694">3</text></g>
</g>

<text class="st" xml:space="preserve" transform="translate(473,184) rotate(-31)">улица  Чехова</text>
<text class="st" xml:space="preserve" transform="translate(663,212) rotate(29)">улица  Чехова</text>
<text class="st" xml:space="preserve" transform="translate(1015,76) rotate(25)">градная  ули</text>
<text class="st" xml:space="preserve" transform="translate(1180,432) rotate(-74)">1-я  улица  Энергетиков</text>

<g fill="#fff" opacity=".12" font-family="Liberation Sans" font-weight="bold">
<text x="1002" y="630" font-size="60">циан</text>
<text x="977" y="654" font-size="20" letter-spacing="2">ID 314437</text>
<path d="M973 565c-9 0-14 7-14 14 0 8 14 22 14 22s14-14 14-22c0-7-5-14-14-14z"/>
</g>
</svg>
</div>

<!-- map overlays -->
<div style="left:369px;top:73px;width:26px;height:26px;background:#fff;border-radius:2px;box-shadow:0 1px 3px rgba(120,140,170,.4)"></div>
<svg style="position:absolute;left:375px;top:79px" width="14" height="14"><path d="M7 2L2 7l5 5M12 2L7 7l5 5" stroke="#2f7fe8" stroke-width="1.800" fill="none"/></svg>

<div style="left:1077px;top:79px;width:191px;height:27px;background:#fff"></div>
<div style="left:1210px;top:85px;font-size:11.5px;color:#4a90e2;letter-spacing:.1px">Войти</div>
<svg style="position:absolute;left:1247px;top:84px" width="16" height="16" fill="none" stroke="#2f80e0" stroke-width="1.500"><path d="M7 1h7v13H7"/><path d="M1 7.500h9M7 4.500l3.500 3-3.500 3" stroke-width="1.700"/></svg>

<div class="btn" style="top:121px"></div><div class="btn" style="top:159px"></div><div class="btn" style="top:196px"></div><div class="btn" style="top:233px"></div><div class="btn" style="top:271px"></div>
<div class="btn" style="top:484px"></div><div class="btn" style="top:521px"></div><div class="btn" style="top:559px"></div><div class="btn" style="top:596px"></div><div class="btn" style="top:633px"></div>
<svg style="position:absolute;left:1243px;top:121px" width="25" height="540" fill="none" stroke="#2f80e0" stroke-width="1.300">
<path d="M12.500 6l5 4-5 4-5-4zM7.500 13l5 4 5-4"/>
<rect x="6" y="47" width="13" height="6" rx="1"/><path d="M8.500 47v2M11 47v2.500M13.500 47v2M16 47v2.500"/>
<circle cx="8" cy="83" r="1.500"/><circle cx="17" cy="83" r="1.500"/><circle cx="8" cy="93" r="1.500"/><path d="M10 83h5M8 85v6"/><circle cx="13.500" cy="91" r="3"/><path d="M16 93.500l2 2"/>
<circle cx="17" cy="121" r="1.200" fill="#2f80e0"/><circle cx="7" cy="126" r="1.200" fill="#2f80e0"/><circle cx="17" cy="132" r="1.200" fill="#2f80e0"/><path d="M16 122l-8 4 8 5"/>
<path d="M8 161v-4h9v4M6 171v-8h13v8h-3M9 168h7v5H9z" stroke-width="1.400"/>
<path d="M6.500 376l12-5-4 12-2-5z" stroke-width="1.500"/>
<rect x="6.500" y="407" width="13" height="11" rx="1.500" stroke-width="1.600"/><rect x="13" y="412" width="4" height="3" fill="#2f80e0" stroke="none"/>
<circle cx="13" cy="449" r="3"/><path d="M16 453a6 6 0 1 1 2-4l-1 3"/><path d="M16 450l2 4" stroke-width="1.600"/>
<path d="M7.500 488h10M12.500 483v10" stroke-width="1.700"/>
<path d="M7.500 525h10" stroke-width="2"/>
</svg>

<div style="left:1242px;top:380px;width:38px;height:37px;background:#1a86f0;border-radius:6px 0 0 6px"></div>
<svg style="position:absolute;left:1244px;top:383px" width="36" height="32"><circle cx="17" cy="16" r="12.500" fill="none" stroke="#fff" stroke-width="1.500"/><path d="M11 10l12 4-5 3 5 3-12 0 3-5z" fill="#fff"/><path d="M12 21l10 0" stroke="#fff"/></svg>

<!-- chat -->
<div style="left:1163px;top:546px;width:100px;height:100px;border-radius:50%;background:radial-gradient(circle,rgba(90,90,90,.3) 15%,rgba(120,120,120,.14) 45%,transparent 70%)"></div>
<svg style="position:absolute;left:1180px;top:564px" width="66" height="66" fill="none">
<path d="M11 12A28 28 0 0 0 11 54M55 12A28 28 0 0 1 55 54" stroke="#2f92ec" stroke-width="1.600"/>
<path d="M18 12A25 25 0 0 0 14 46M49 54A25 25 0 0 0 55 22" stroke="#b9b4b0" stroke-width="1.200"/>
<circle cx="33" cy="32" r="20" fill="#1a86f0"/>
<path d="M33 20c-7.500 0-13 5-13 12 0 4 2 7 5 9l-1 5 6-3c1 .2 2 .2 3 .2 7.500 0 13-5 13-11S40.500 20 33 20z" fill="#fff"/>
<path d="M26 27.500h14M26 32h14M26 36.500h14" stroke="#1a6fd0" stroke-width="1.800"/>
</svg>

<!-- legend -->
<div style="left:375px;top:657px;width:287px;height:31px;background:#fff"></div>
<div style="left:385px;top:664px;font-size:13.500px;color:#444;letter-spacing:.2px;font-weight:bold">Легенда</div>
<svg style="position:absolute;left:638px;top:665px" width="12" height="15"><path d="M3 5l3-3 3 3M3 10l3 3 3-3" stroke="#444" stroke-width="1.400" fill="none"/></svg>

<!-- scale -->
<div style="left:1131px;top:681px;width:149px;height:11px;background:#dbe7f2"></div>
<div style="left:1136px;top:681px;font-size:9.500px;color:#555;line-height:11px">НСПД 2025 ©</div>
<div style="left:1231px;top:681px;font-size:9.500px;color:#444;line-height:11px">50 m</div>
<svg style="position:absolute;left:1209px;top:686px" width="62" height="6"><path d="M1 1v4h60V1" stroke="#333" fill="none" stroke-width=".8"/></svg>

<!-- taskbar -->
<div id="tb"></div>
<svg style="position:absolute;left:0;top:692px" width="240" height="28">
<circle cx="15" cy="14" r="9.500" fill="none" stroke="#e8e8e8" stroke-width="2"/><path d="M10 10v6a3 3 0 0 0 3 3h4a3 3 0 0 0 3-3v-4a2 2 0 0 0-4 0v4m0-4a2 2 0 0 0-3 0v4" stroke="#e8e8e8" stroke-width="1.300" fill="none"/>
<rect x="35" y="6" width="18" height="18" rx="1" fill="#e8b96a"/>
<path d="M63 7a1 1 0 0 1 1-1h6l2 2h9a1 1 0 0 1 1 1v14a1 1 0 0 1-1 1H64a1 1 0 0 1-1-1z" fill="#eec277"/><path d="M63 10h19" stroke="#d8a860"/>
<rect x="60" y="26.500" width="25" height="1.500" fill="#3b8de0"/>
<rect x="90" y="5" width="19" height="19" rx="5" fill="#ef7a45"/><circle cx="99.500" cy="14.500" r="5" fill="none" stroke="#fff" stroke-width="2.500"/><circle cx="96.500" cy="14.500" r="2" fill="#ef7a45"/>
<rect x="117" y="5" width="19" height="19" rx="3" fill="#1a1a1a" stroke="#333"/><text x="120" y="13" font-size="7" fill="#ddd" font-family="Liberation Mono">$_</text>
<rect x="140" y="0" width="25" height="28" fill="#4a4a4a"/>
<circle cx="152.500" cy="14" r="10.500" fill="#fff"/><path d="M147.500 8l5 7 5-7M152.500 15v7" stroke="#e6322e" stroke-width="2.500" fill="none"/>
<rect x="140" y="26.500" width="25" height="1.500" fill="#3b8de0"/>
<rect x="170" y="5" width="19" height="19" rx="3" fill="#52646a"/><path d="M170 16h19" stroke="#a6d8d8" stroke-width="1.200"/>
<rect x="167" y="26.500" width="25" height="1.500" fill="#3b8de0"/>
<rect x="197" y="5" width="19" height="19" rx="4" fill="#4a78c0"/><rect x="200" y="9" width="13" height="10" fill="#e8ecf4"/><path d="M200 9l6.500 6 6.500-6" stroke="#c8a070" fill="none"/>
<rect x="193" y="26.500" width="26" height="1.500" fill="#3b8de0"/>
</svg>
<svg style="position:absolute;left:950px;top:692px" width="190" height="28" fill="none">
<rect x="5" y="6" width="16" height="15" fill="#8a8a8a"/><path d="M8 10l3 3 2-3 2 3 3-3v7H8z" fill="#555"/>
<circle cx="35" cy="14.500" r="8" fill="#2a9a8a"/><circle cx="35" cy="14.500" r="4.500" fill="#fff"/><path d="M32 14l5-3-2 4 3 2" stroke="#2a70c0" stroke-width="1.200"/>
<path d="M48 8l6-2 6 2c0 6-2 10-6 13-4-3-6-7-6-13z" stroke="#ccc" stroke-width="1.200"/><path d="M51 10h6l-1 5-2 2-2-2z" fill="#999"/>
<path d="M66 15l5-3 3-4 2 4-1 4h-3l-1 4-2-4z" fill="#ddd"/>
<path d="M93 9h6v4h-6zM90 13h12v6h-12z" fill="#ddd"/><rect x="93" y="17" width="6" height="4" fill="#3a8a3a"/>
<rect x="115" y="6" width="12" height="16" rx="1" stroke="#e0e0e0" stroke-width="1.200"/><rect x="119" y="11" width="4" height="4" fill="#e0e0e0"/>
</svg>
<span class="tr" style="left:1030px">1</span><span class="tr" style="left:1056px">2</span>
<span class="tr" style="left:1084px">ru</span>
<svg style="position:absolute;left:1098px;top:692px" width="30" height="28" fill="#ddd">
<rect x="5.500" y="6" width="4" height="4"/><rect x="0" y="16" width="4" height="4"/><rect x="10" y="16" width="4" height="4"/><path d="M7 10v3H2v3M7 13h5v3" stroke="#ddd" fill="none"/>
<path d="M18 11h3l3-3v12l-3-3h-3z"/><path d="M26 10a5 5 0 0 1 0 8M28 8a7 7 0 0 1 0 12" stroke="#ddd" fill="none"/>
</svg>
<span class="tr" style="left:1135px;font-size:9px;letter-spacing:-.2px">Понедельник, 21 апр 2025, 10:03</span>
</body></html>
